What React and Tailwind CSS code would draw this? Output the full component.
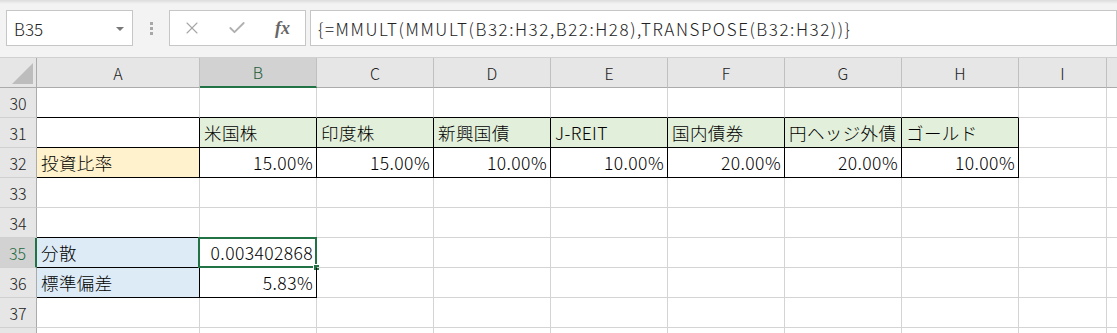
import clsx from 'clsx'
import { X, Check } from 'lucide-react'

const FONT = { fontFamily: '"Noto Sans CJK JP", "Noto Sans", sans-serif' }

const cols = [
  { key: 'A', w: 'w-[163px]' },
  { key: 'B', w: 'w-[117px]' },
  { key: 'C', w: 'w-[117px]' },
  { key: 'D', w: 'w-[117px]' },
  { key: 'E', w: 'w-[117px]' },
  { key: 'F', w: 'w-[117px]' },
  { key: 'G', w: 'w-[117px]' },
  { key: 'H', w: 'w-[117px]' },
  { key: 'I', w: 'w-[88px]' },
  { key: 'J', w: 'w-[60px]' },
]

const rows = [30, 31, 32, 33, 34, 35, 36, 37, 38]

// cell contents: [text, align, fill]
const cells = {
  B31: ['米国株', 'l', 'bg-[#e2efda]'],
  C31: ['印度株', 'l', 'bg-[#e2efda]'],
  D31: ['新興国債', 'l', 'bg-[#e2efda]'],
  E31: ['J-REIT', 'l', 'bg-[#e2efda]'],
  F31: ['国内債券', 'l', 'bg-[#e2efda]'],
  G31: ['円ヘッジ外債', 'l', 'bg-[#e2efda]'],
  H31: ['ゴールド', 'l', 'bg-[#e2efda]'],
  A32: ['投資比率', 'l', 'bg-[#fff2cc]'],
  B32: ['15.00%', 'r'],
  C32: ['15.00%', 'r'],
  D32: ['10.00%', 'r'],
  E32: ['10.00%', 'r'],
  F32: ['20.00%', 'r'],
  G32: ['20.00%', 'r'],
  H32: ['10.00%', 'r'],
  A35: ['分散', 'l', 'bg-[#ddebf7]'],
  B35: ['0.003402868', 'r'],
  A36: ['標準偏差', 'l', 'bg-[#ddebf7]'],
  B36: ['5.83%', 'r'],
}

function boxed(r, ci) {
  if (r >= 31 && r <= 32 && ci >= 0 && ci <= 7) return true
  if (r >= 35 && r <= 36 && ci >= 0 && ci <= 1) return true
  return false
}

function Toolbar() {
  return (
    <div className="h-[57px] bg-[#f3f3f3] bg-gradient-to-b from-[#dcdcdc] via-[#f3f3f3] to-[#f3f3f3] [background-size:100%_8px] bg-no-repeat">
      <div className="flex items-start pt-[10px] pl-[6px]">
        <div className="flex h-[36px] w-[127px] items-center justify-between border border-[#c6c6c6] bg-white pl-[7px] pr-[8px] pt-[2px]">
          <span className="text-[17px] font-light text-[#222]">B35</span>
          <span className="h-0 w-0 border-x-[4px] border-t-[4px] border-x-transparent border-t-[#777]" />
        </div>
        <div className="ml-[17px] flex h-[36px] flex-col items-center justify-center gap-[2px]">
          <span className="h-[3px] w-[3px] bg-[#a8a8a8]" />
          <span className="h-[3px] w-[3px] bg-[#a8a8a8]" />
          <span className="h-[3px] w-[3px] bg-[#a8a8a8]" />
        </div>
        <div className="ml-[16px] flex h-[36px] w-[137px] items-center border border-[#c6c6c6] bg-white">
          <X size={20} strokeWidth={1.3} className="ml-[12px] text-[#a6a6a6]" />
          <Check size={20} strokeWidth={2.2} className="ml-[25px] text-[#b0b0b0]" />
          <span
            className="ml-[28px] text-[18px] italic font-bold text-[#666]"
            style={{ fontFamily: '"Liberation Serif", serif' }}
          >
            fx
          </span>
        </div>
        <div className="ml-[4px] flex h-[36px] flex-1 items-center border border-[#c6c6c6] bg-white pl-[7px] pt-[1px]">
          <span className="whitespace-nowrap text-[17px] font-light tracking-[1.55px] text-[#222]">
            {'{=MMULT(MMULT(B32:H32,B22:H28),TRANSPOSE(B32:H32))}'}
          </span>
        </div>
      </div>
    </div>
  )
}

function HeaderRow() {
  return (
    <div className="flex h-[31px] border-t border-[#d0d0d0] bg-[#e6e6e6]">
      <div className="relative w-[37px] shrink-0 border-r border-b border-[#ababab]">
        <svg className="absolute left-[12px] top-[5px]" width="21" height="21">
          <polygon points="21,0 21,21 0,21" fill="#bdbdbd" />
        </svg>
      </div>
      {cols.map((c) => (
        <div
          key={c.key}
          className={clsx(
            'flex shrink-0 items-center justify-center border-r border-r-[#c0c0c0] text-[16px] font-light',
            c.w,
            c.key === 'B'
              ? 'border-b-2 border-b-[#217346] bg-[#d2d2d2] text-[#1e5e3a]'
              : 'border-b border-b-[#ababab] text-[#222]',
          )}
        >
          {c.key === 'J' ? '' : c.key}
        </div>
      ))}
    </div>
  )
}

function Row({ r }) {
  const active = r === 35
  return (
    <div className="flex h-[30px]">
      <div
        className={clsx(
          'flex w-[37px] shrink-0 items-center justify-center border-b border-b-[#d0d0d0] text-[16px] font-light',
          active
            ? 'border-r-2 border-r-[#217346] bg-[#d2d2d2] text-[#1e6b3f]'
            : 'border-r border-r-[#ababab] bg-[#e6e6e6] text-[#222]',
        )}
      >
        {r < 38 ? r : ''}
      </div>
      {cols.map((c, ci) => {
        const id = c.key + r
        const cell = cells[id]
        const right = boxed(r, ci) || boxed(r, ci + 1)
        const bottom = boxed(r, ci) || boxed(r + 1, ci)
        return (
          <div
            key={id}
            className={clsx(
              'relative flex shrink-0 items-center border-r border-b text-[17.5px] font-light tracking-[0.4px] text-black',
              c.w,
              right ? 'border-r-black' : 'border-r-[#d4d4d4]',
              bottom ? 'border-b-black' : 'border-b-[#d4d4d4]',
              cell && cell[2],
              cell && cell[1] === 'r' ? 'justify-end pr-[3px]' : 'pl-[4px]',
            )}
          >
            {cell && <span className="whitespace-nowrap leading-none">{cell[0]}</span>}
            {id === 'B35' && (
              <>
                <div className="pointer-events-none absolute -left-[2px] -top-[1px] -right-[1px] -bottom-[1px] border-2 border-[#217346]" />
                <div className="absolute -right-[4px] -bottom-[4px] h-[7px] w-[7px] border border-white bg-[#217346]" />
              </>
            )}
          </div>
        )
      })}
    </div>
  )
}

export default function App() {
  return (
    <div className="h-[333px] w-[1117px] overflow-hidden bg-white" style={FONT}>
      <Toolbar />
      <HeaderRow />
      {rows.map((r) => (
        <Row key={r} r={r} />
      ))}
    </div>
  )
}
